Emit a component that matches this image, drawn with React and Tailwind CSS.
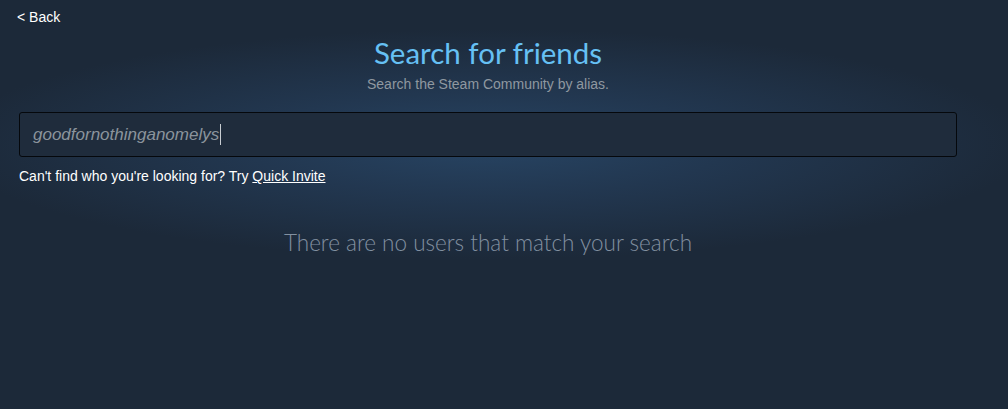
export default function App() {
  return (
    <div className="w-[1008px] h-[409px] overflow-hidden bg-[#1c2939] bg-[radial-gradient(ellipse_540px_115px_at_488px_144px,#274463_0%,#223750_45%,#1c2939_100%)] font-['Liberation_Sans',Arial,sans-serif]">
      <div className="w-[976px] px-[19px]">
        <div className="pt-[7px] h-[28px] text-[14px] text-white -ml-[2px]">&lt; Back</div>

        <div className="flex flex-col items-center">
          <h1 className="mt-[8px] text-[29.5px] leading-[34px] text-[#66c0f4] font-['Lato',sans-serif]">
            Search for friends
          </h1>
          <p className="mt-[6px] text-[14px] leading-[17px] text-[#8f98a0]">
            Search the Steam Community by alias.
          </p>
        </div>

        <div className="mt-[19px] h-[45px] rounded-[3px] border border-[#05080c] bg-[#1f2c3c] flex items-center pl-[13px]">
          <span className="italic text-[17px] text-[#8b949c]">goodfornothinganomelys</span>
          <span className="w-px h-[21px] bg-[#c8cdd2] ml-[1px]"></span>
        </div>

        <p className="mt-[11px] text-[14px] leading-[17px] text-white">
          Can't find who you're looking for? Try <span className="underline">Quick Invite</span>
        </p>

        <p className="mt-[44px] text-center text-[22.5px] leading-[27px] font-light text-[#8290a0] font-['Lato',sans-serif]">
          There are no users that match your search
        </p>
      </div>
    </div>
  );
}
